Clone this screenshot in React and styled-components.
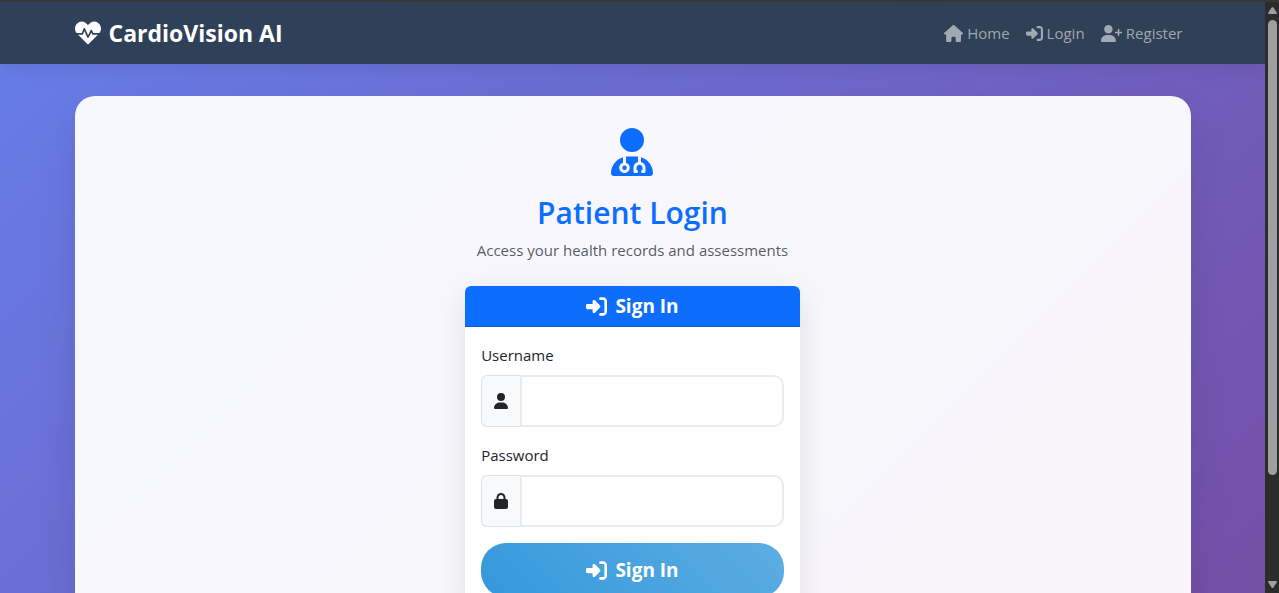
import { useState } from "react";
import styled, { createGlobalStyle } from "styled-components";
import { FaHeartbeat } from "react-icons/fa";
import {
  FaHouse,
  FaRightToBracket,
  FaUserPlus,
  FaUserDoctor,
  FaUser,
  FaLock,
} from "react-icons/fa6";

const GlobalStyle = createGlobalStyle`
  * {
    box-sizing: border-box;
  }
  body {
    margin: 0;
    color: #212529;
    font-family: "Segoe UI", "Open Sans", "Noto Sans", sans-serif;
    font-size: 15px;
    line-height: 24px;
  }
  svg {
    display: block;
    flex-shrink: 0;
    width: auto;
    height: 1em;
  }
  svg[viewBox="0 0 448 512"] {
    aspect-ratio: 7 / 8;
  }
  svg[viewBox="0 0 576 512"] {
    aspect-ratio: 9 / 8;
  }
  svg[viewBox="0 0 640 512"] {
    aspect-ratio: 5 / 4;
  }
`;

const Window = styled.div`
  display: flex;
  height: 100vh;
  border-top: 2px solid #363636;
  overflow: hidden;
`;

const Viewport = styled.div`
  flex: 1;
  min-width: 0;
  overflow: hidden;
`;

const Page = styled.div`
  min-height: 123vh;
  background: linear-gradient(135deg, #667eea 0%, #764ba2 100%);
`;

const Container = styled.div`
  max-width: 1140px;
  margin: 0 auto;
  padding: 0 12px;
`;

const Navbar = styled.nav`
  background: rgba(44, 62, 80, 0.95);
  box-shadow: 0 2px 20px rgba(0, 0, 0, 0.1);
`;

const NavInner = styled(Container)`
  display: flex;
  align-items: center;
  justify-content: space-between;
  height: 62px;
`;

const Brand = styled.a`
  display: flex;
  align-items: center;
  gap: 8px;
  color: #fff;
  font-size: 23px;
  font-weight: 700;
  text-decoration: none;
  svg {
    font-size: 26px;
  }
`;

const NavList = styled.ul`
  display: flex;
  margin: 0;
  padding: 0;
  list-style: none;
`;

const NavLink = styled.a`
  display: flex;
  align-items: center;
  gap: 4px;
  padding: 8px;
  color: rgba(255, 255, 255, 0.55);
  font-weight: 500;
  text-decoration: none;
  svg {
    font-size: 17px;
  }
`;

const Panel = styled.main`
  display: grid;
  grid-template-columns: repeat(3, 1fr);
  column-gap: 24px;
  min-height: 100vh;
  margin: 32px 0;
  padding: 32px;
  border-radius: 20px;
  background: rgba(255, 255, 255, 0.95);
  box-shadow: 0 20px 40px rgba(0, 0, 0, 0.1);
`;

const Column = styled.div`
  grid-column: 2;
`;

const Intro = styled.header`
  display: flex;
  flex-direction: column;
  align-items: center;
  margin-bottom: 24px;
  color: #0d6efd;
  text-align: center;
  svg {
    font-size: 48px;
  }
`;

const Title = styled.h2`
  margin: 18px 0 6px;
  font-size: 30px;
  font-weight: 600;
  line-height: 38px;
`;

const Subtitle = styled.p`
  margin: 0;
  color: rgba(33, 37, 41, 0.75);
  white-space: nowrap;
`;

const Card = styled.section`
  border-radius: 6px;
  background: #fff;
  box-shadow: 0 8px 32px rgba(0, 0, 0, 0.1);
`;

const CardTitle = styled.h4`
  display: flex;
  align-items: center;
  justify-content: center;
  gap: 8px;
  margin: 0;
  padding: 8px 16px;
  border-bottom: 1px solid #0b5cd6;
  border-radius: 6px 6px 0 0;
  background: #0d6efd;
  color: #fff;
  font-size: 19px;
  font-weight: 700;
  svg {
    font-size: 21px;
  }
`;

const Form = styled.form`
  display: flex;
  flex-direction: column;
  gap: 16px;
  padding: 16px;
`;

const Label = styled.label`
  display: block;
  margin-bottom: 8px;
`;

const InputGroup = styled.div`
  display: flex;
`;

const Addon = styled.span`
  display: flex;
  align-items: center;
  padding: 0 12px;
  border: 1px solid #dee2e6;
  border-right: 0;
  border-radius: 6px 0 0 6px;
  background: #f8f9fa;
  font-size: 16px;
`;

const Input = styled.input`
  flex: 1;
  min-width: 0;
  height: 52px;
  padding: 12px 16px;
  border: 2px solid #e9ecef;
  border-radius: 0 10px 10px 0;
  outline: none;
  background: #fff;
  color: #212529;
  font: inherit;
  &:focus {
    border-color: #3498db;
  }
`;

const SubmitButton = styled.button`
  display: flex;
  align-items: center;
  justify-content: center;
  gap: 8px;
  height: 54px;
  border: 0;
  border-radius: 25px;
  background: linear-gradient(45deg, #3498db, #5dade2);
  color: #fff;
  font-family: inherit;
  font-size: 19px;
  font-weight: 700;
  cursor: pointer;
  svg {
    font-size: 21px;
  }
`;

const Scrollbar = styled.div`
  display: flex;
  flex-direction: column;
  align-items: center;
  width: 14px;
  padding: 5px 0;
  background: #2c2c2c;
  color: #9f9f9f;
  svg {
    width: 9px;
    height: 7px;
  }
`;

const Track = styled.div`
  flex: 1;
  width: 9px;
  margin: 6px 0;
`;

const Thumb = styled.div`
  height: 82%;
  border-radius: 5px;
  background: #9f9f9f;
`;

const links = [
  { label: "Home", icon: FaHouse },
  { label: "Login", icon: FaRightToBracket },
  { label: "Register", icon: FaUserPlus },
];

function Field({ id, label, type, icon: Icon, value, onChange }) {
  return (
    <div>
      <Label htmlFor={id}>{label}</Label>
      <InputGroup>
        <Addon>
          <Icon />
        </Addon>
        <Input
          id={id}
          type={type}
          value={value}
          onChange={(e) => onChange(e.target.value)}
        />
      </InputGroup>
    </div>
  );
}

export default function App() {
  const [username, setUsername] = useState("");
  const [password, setPassword] = useState("");

  return (
    <Window>
      <GlobalStyle />
      <Viewport>
        <Page>
          <Navbar>
            <NavInner>
              <Brand href="#">
                <FaHeartbeat />
                CardioVision AI
              </Brand>
              <NavList>
                {links.map(({ label, icon: Icon }) => (
                  <li key={label}>
                    <NavLink href="#">
                      <Icon />
                      {label}
                    </NavLink>
                  </li>
                ))}
              </NavList>
            </NavInner>
          </Navbar>
          <Container>
            <Panel>
              <Column>
                <Intro>
                  <FaUserDoctor />
                  <Title>Patient Login</Title>
                  <Subtitle>Access your health records and assessments</Subtitle>
                </Intro>
                <Card>
                  <CardTitle>
                    <FaRightToBracket />
                    Sign In
                  </CardTitle>
                  <Form onSubmit={(e) => e.preventDefault()}>
                    <Field
                      id="username"
                      label="Username"
                      type="text"
                      icon={FaUser}
                      value={username}
                      onChange={setUsername}
                    />
                    <Field
                      id="password"
                      label="Password"
                      type="password"
                      icon={FaLock}
                      value={password}
                      onChange={setPassword}
                    />
                    <SubmitButton type="submit">
                      <FaRightToBracket />
                      Sign In
                    </SubmitButton>
                  </Form>
                </Card>
              </Column>
            </Panel>
          </Container>
        </Page>
      </Viewport>
      <Scrollbar aria-hidden="true">
        <svg viewBox="0 0 9 7" fill="currentColor">
          <path d="M3.6.6q.9-1 1.8 0l3.3 4.8Q9.2 7 8 7H1Q-.2 7 .3 5.4z" />
        </svg>
        <Track>
          <Thumb />
        </Track>
        <svg viewBox="0 0 9 7" fill="currentColor">
          <path d="M3.6 6.4q.9 1 1.8 0l3.3-4.8Q9.2 0 8 0H1Q-.2 0 .3 1.6z" />
        </svg>
      </Scrollbar>
    </Window>
  );
}
